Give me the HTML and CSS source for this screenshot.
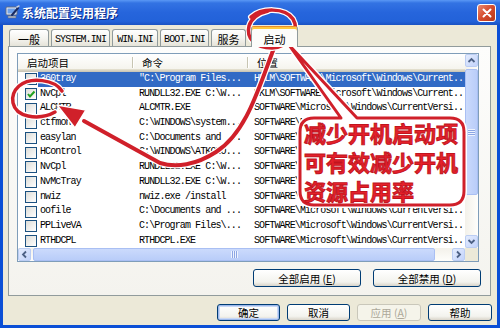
FILE: index.html
```html
<!DOCTYPE html>
<html lang="zh-CN">
<head>
<meta charset="utf-8">
<title>系统配置实用程序</title>
<link rel="stylesheet" href="styles.css">
</head>
<body>
<div class="window">
  <div class="titlebar">
    <svg class="app-icon" width="15" height="15" viewBox="0 0 15 15">
      <rect x="1" y="2" width="11" height="8" rx="1" fill="#E8ECF4" stroke="#5A6A88"/>
      <rect x="2.5" y="3.5" width="8" height="5" fill="#6FA0E8"/>
      <rect x="3" y="11" width="8" height="2" fill="#B8BEC8" stroke="#5A6A88" stroke-width="0.6"/>
      <path d="M7 10 L13 3" stroke="#1A2A60" stroke-width="2" stroke-linecap="round"/>
      <path d="M12 2 L14 1" stroke="#C8D0E0" stroke-width="1.5" stroke-linecap="round"/>
    </svg>
    <span class="title">系统配置实用程序</span>
    <div class="close">
      <svg width="10" height="10" viewBox="0 0 10 10"><path d="M1.5 1.5 L8.5 8.5 M8.5 1.5 L1.5 8.5" stroke="#fff" stroke-width="2" stroke-linecap="round"/></svg>
    </div>
  </div>

  <div class="client">
    <div class="tabs">
      <div class="tab w1">一般</div>
      <div class="tab mono w2">SYSTEM.INI</div>
      <div class="tab mono w3">WIN.INI</div>
      <div class="tab mono w4">BOOT.INI</div>
      <div class="tab w5">服务</div>
      <div class="tab active">启动</div>
    </div>

    <div class="panel">
      <div class="list">
        <div class="list-view">
          <div class="header">
            <div class="hcell h1">启动项目</div>
            <div class="hcell h2">命令</div>
            <div class="hcell h3">位置</div>
          </div>
          <div class="rows">
            <div class="row selected"><div class="cb"><span class="box"></span></div><div class="cells"><span class="cell c1">360tray</span><span class="cell c2">"C:\Program Files...</span><span class="cell c3">HKLM\SOFTWARE\Microsoft\Windows\Current...</span></div></div>
            <div class="row"><div class="cb"><span class="box checked"><svg width="10" height="10" viewBox="0 0 10 10"><path d="M2 5 L4 7.5 L8.5 2.5" fill="none" stroke="#21A121" stroke-width="2"/></svg></span></div><div class="cells"><span class="cell c1">NvCpl</span><span class="cell c2">RUNDLL32.EXE C:\W...</span><span class="cell c3">HKLM\SOFTWARE\Microsoft\Windows\Current...</span></div></div>
            <div class="row"><div class="cb"><span class="box"></span></div><div class="cells"><span class="cell c1">ALCMTR</span><span class="cell c2">ALCMTR.EXE</span><span class="cell c3">SOFTWARE\Microsoft\Windows\CurrentVersi...</span></div></div>
            <div class="row"><div class="cb"><span class="box"></span></div><div class="cells"><span class="cell c1">ctfmon</span><span class="cell c2">C:\WINDOWS\system...</span><span class="cell c3">SOFTWARE\Microsoft\Windows\CurrentVersi...</span></div></div>
            <div class="row"><div class="cb"><span class="box"></span></div><div class="cells"><span class="cell c1">easylan</span><span class="cell c2">C:\Documents and ...</span><span class="cell c3">SOFTWARE\Microsoft\Windows\CurrentVersi...</span></div></div>
            <div class="row"><div class="cb"><span class="box"></span></div><div class="cells"><span class="cell c1">HControl</span><span class="cell c2">C:\WINDOWS\ATKOIO...</span><span class="cell c3">SOFTWARE\Microsoft\Windows\CurrentVersi...</span></div></div>
            <div class="row"><div class="cb"><span class="box"></span></div><div class="cells"><span class="cell c1">NvCpl</span><span class="cell c2">RUNDLL32.EXE C:\W...</span><span class="cell c3">SOFTWARE\Microsoft\Windows\CurrentVersi...</span></div></div>
            <div class="row"><div class="cb"><span class="box"></span></div><div class="cells"><span class="cell c1">NvMcTray</span><span class="cell c2">RUNDLL32.EXE C:\W...</span><span class="cell c3">SOFTWARE\Microsoft\Windows\CurrentVersi...</span></div></div>
            <div class="row"><div class="cb"><span class="box"></span></div><div class="cells"><span class="cell c1">nwiz</span><span class="cell c2">nwiz.exe /install</span><span class="cell c3">SOFTWARE\Microsoft\Windows\CurrentVersi...</span></div></div>
            <div class="row"><div class="cb"><span class="box"></span></div><div class="cells"><span class="cell c1">oofile</span><span class="cell c2">C:\Documents and ...</span><span class="cell c3">SOFTWARE\Microsoft\Windows\CurrentVersi...</span></div></div>
            <div class="row"><div class="cb"><span class="box"></span></div><div class="cells"><span class="cell c1">PPLiveVA</span><span class="cell c2">C:\Program Files\...</span><span class="cell c3">SOFTWARE\Microsoft\Windows\CurrentVersi...</span></div></div>
            <div class="row"><div class="cb"><span class="box"></span></div><div class="cells"><span class="cell c1">RTHDCPL</span><span class="cell c2">RTHDCPL.EXE</span><span class="cell c3">SOFTWARE\Microsoft\Windows\CurrentVersi...</span></div></div>
          </div>
        </div>

        <div class="vscroll">
          <div class="sbtn"><svg width="13" height="13" viewBox="0 0 13 13"><path d="M3.5 8 L6.5 5 L9.5 8" fill="none" stroke="#4D6185" stroke-width="1.8"/></svg></div>
          <div class="vthumb"><span class="grip-v"></span></div>
          <div class="vtrack"></div>
          <div class="sbtn"><svg width="13" height="13" viewBox="0 0 13 13"><path d="M3.5 5 L6.5 8 L9.5 5" fill="none" stroke="#4D6185" stroke-width="1.8"/></svg></div>
        </div>

        <div class="hscroll">
          <div class="sbtn"><svg width="13" height="13" viewBox="0 0 13 13"><path d="M8 3.5 L5 6.5 L8 9.5" fill="none" stroke="#4D6185" stroke-width="1.8"/></svg></div>
          <div class="hthumb"><span class="grip-h"></span></div>
          <div class="htrack"></div>
          <div class="sbtn"><svg width="13" height="13" viewBox="0 0 13 13"><path d="M5 3.5 L8 6.5 L5 9.5" fill="none" stroke="#4D6185" stroke-width="1.8"/></svg></div>
        </div>
        <div class="corner"></div>
      </div>

      <div class="panel-actions">
        <div class="btn wide">全部启用 (<u>E</u>)</div>
        <div class="btn wide">全部禁用 (<u>D</u>)</div>
      </div>
    </div>

    <div class="dialog-actions">
      <div class="btn default">确定</div>
      <div class="btn">取消</div>
      <div class="btn disabled">应用 (<u>A</u>)</div>
      <div class="btn">帮助</div>
    </div>
  </div>

  <svg class="annot" width="500" height="328" viewBox="0 0 500 328">
    <g stroke-linecap="round" stroke-linejoin="round">
      <path d="M314,118 L341,118 L289,45 L357,118 L450,118 Q464,118 464,132 L464,191 Q464,205 450,205 L314,205 Q300,205 300,191 L300,132 Q300,118 314,118 Z" fill="none" stroke="#fff" stroke-width="6"/>
      <path d="M314,118 L341,118 L289,45 L357,118 L450,118 Q464,118 464,132 L464,191 Q464,205 450,205 L314,205 Q300,205 300,191 L300,132 Q300,118 314,118 Z" fill="#fff" stroke="#D0202A" stroke-width="3"/>

      <path d="M274,48 C258,90 246,133 216,152 C196,165 176,168 160,163 L84,121" fill="none" stroke="#fff" stroke-width="6.5"/>
      <path d="M274,48 C258,90 246,133 216,152 C196,165 176,168 160,163 L84,121" fill="none" stroke="#D0202A" stroke-width="4"/>
      <path d="M57,105 L86,110 L75,128 Z" fill="#D0202A" stroke="#fff" stroke-width="1.5"/>

      <path d="M62,91 C55,80 31,76 19,86 C9,95 10,112 28,116 C38,118 48,116 55,112" fill="none" stroke="#fff" stroke-width="6"/>
      <path d="M62,91 C55,80 31,76 19,86 C9,95 10,112 28,116 C38,118 48,116 55,112" fill="none" stroke="#D0202A" stroke-width="3.5"/>

      <path d="M251,17 C261,8 285,7 293,19 C300,31 291,47 272,48 C255,48 246,38 249,26 C251,19 258,13 268,11" fill="none" stroke="#fff" stroke-width="6"/>
      <path d="M251,17 C261,8 285,7 293,19 C300,31 291,47 272,48 C255,48 246,38 249,26 C251,19 258,13 268,11" fill="none" stroke="#D0202A" stroke-width="3.5"/>
    </g>
  </svg>
  <div class="callout">减少开机启动项<br>可有效减少开机<br>资源占用率</div>
</div>
</body>
</html>
```

FILE: styles.css
```css
* { box-sizing: border-box; }
html, body { margin: 0; padding: 0; width: 500px; height: 328px; overflow: hidden; }
body {
  font-family: "Noto Sans CJK SC", "Noto Sans", sans-serif;
  font-size: 11px;
  color: #000;
  background: #fff;
}

.window {
  position: relative;
  width: 500px;
  height: 328px;
  background: #0B4FD6;
  display: flex;
  flex-direction: column;
}

/* title bar */
.titlebar {
  height: 25px;
  flex: none;
  display: flex;
  align-items: center;
  padding: 0 4px 0 5px;
  background: linear-gradient(#5A98F5 0%, #3373E3 12%, #2665DC 50%, #2262D9 85%, #1A52C2 100%);
}
.app-icon { flex: none; margin-right: 2px; }
.title {
  flex: 1;
  color: #fff;
  font-weight: 700;
  font-size: 12px;
  line-height: 25px;
  text-shadow: 1px 1px 0 #0B2A88;
}
.close {
  width: 19px;
  height: 18px;
  border: 1px solid #fff;
  border-radius: 3px;
  background: linear-gradient(135deg, #EA8A70, #D54B2C 50%, #B9381A);
  display: flex;
  align-items: center;
  justify-content: center;
}

/* client area */
.client {
  flex: 1;
  margin: 0 3px 3px;
  background: #ECE9D8;
  padding: 1px 5px 0 5px;
  display: flex;
  flex-direction: column;
}

/* tabs */
.tabs {
  height: 20px;
  display: flex;
  align-items: flex-end;
  gap: 2px;
  padding-left: 1px;
  position: relative;
  z-index: 1;
}
.tab {
  height: 17px;
  border: 1px solid #919B9C;
  border-bottom: none;
  border-radius: 3px 3px 0 0;
  background: linear-gradient(#FFFFFF, #F4F3EE 55%, #E5E3D8);
  display: flex;
  align-items: center;
  justify-content: center;
  font-size: 11px;
  padding-top: 2px;
}
.tab.mono {
  font-family: "Liberation Mono", monospace;
  font-size: 10px;
  letter-spacing: -0.9px;
}
.w1 { width: 40px; }
.w2 { width: 59px; }
.w3 { width: 46px; }
.w4 { width: 49px; }
.w5 { width: 35px; }
.tab.active {
  width: 47px;
  height: 21px;
  margin-left: 3px;
  margin-bottom: -1px;
  border-top: 1px solid #E68B2C;
  box-shadow: inset 0 2px 0 #FFC83C;
  background: #FCFCFA;
  padding-top: 3px;
}

/* tab page */
.panel {
  width: 483px;
  height: 250px;
  border: 1px solid #919B9C;
  background: linear-gradient(#FDFDFC, #F4F3EE);
  padding: 6px 10px 0 8px;
  display: flex;
  flex-direction: column;
}

.list {
  width: 462px;
  height: 209px;
  border: 1px solid #7F9DB9;
  background: #fff;
  display: grid;
  grid-template-columns: 1fr 13px;
  grid-template-rows: 1fr 13px;
  overflow: hidden;
}
.list-view { overflow: hidden; min-width: 0; }

.header {
  height: 18px;
  display: flex;
  background: linear-gradient(#FFFFFF, #F3F2EA);
  box-shadow: inset 0 -1px 0 #CBC7B8, inset 0 -2px 0 #D6D2C2, inset 0 -3px 0 #E2DECD;
}
.hcell {
  position: relative;
  padding-left: 9px;
  line-height: 17px;
  font-size: 10.5px;
  white-space: nowrap;
}
.h1, .h2 { width: 115px; flex: none; }
.h3 { flex: 1; }
.h1::after, .h2::after {
  content: "";
  position: absolute;
  right: 0;
  top: 3px;
  bottom: 4px;
  width: 1px;
  background: #C7C5B2;
  box-shadow: 1px 0 0 #fff;
}

.row {
  height: 14.7px;
  display: flex;
  align-items: stretch;
}
.cb {
  width: 20px;
  flex: none;
  display: flex;
  align-items: center;
  padding-left: 7px;
}
.box {
  width: 12px;
  height: 12px;
  border: 1px solid #1C5180;
  background: linear-gradient(135deg, #DCDCD7, #FFFFFF);
  display: flex;
  align-items: center;
  justify-content: center;
}
.cells {
  flex: 1;
  display: flex;
  min-width: 0;
}
.row.selected .cells { background: #316AC5; color: #fff; }
.cell {
  font-family: "Liberation Mono", monospace;
  font-size: 10px;
  letter-spacing: -0.9px;
  line-height: 14.7px;
  white-space: nowrap;
  overflow: hidden;
}
.c1 { width: 95px; flex: none; padding-left: 2px; }
.c2 { width: 115px; flex: none; padding-left: 6px; }
.c3 { flex: 1; padding-left: 6px; }

/* scrollbars */
.vscroll {
  display: flex;
  flex-direction: column;
  background: linear-gradient(90deg, #F3F1EA, #FEFEFB);
}
.hscroll {
  display: flex;
  background: linear-gradient(#F3F1EA, #FEFEFB);
}
.corner { background: #ECE9D8; }
.sbtn {
  width: 13px;
  height: 13px;
  flex: none;
  border: 1px solid #BBCDF3;
  border-radius: 2px;
  background: linear-gradient(135deg, #E4ECFD, #C2D3FB);
}
.sbtn svg { display: block; margin: -1px; }
.vthumb {
  height: 126px;
  margin-top: 2px;
  flex: none;
  border: 1px solid #A9BFF3;
  border-radius: 2px;
  background: linear-gradient(90deg, #CBDAFC, #B9CDF9);
  display: flex;
  align-items: center;
  justify-content: center;
}
.vtrack { flex: 1; }
.hthumb {
  width: 402px;
  margin-left: 2px;
  flex: none;
  border: 1px solid #A9BFF3;
  border-radius: 2px;
  background: linear-gradient(#CBDAFC, #B9CDF9);
  display: flex;
  align-items: center;
  justify-content: center;
}
.htrack { flex: 1; }
.grip-v {
  width: 7px;
  height: 7px;
  background: repeating-linear-gradient(#EEF3FE 0 1px, #8CA6E4 1px 2px);
}
.grip-h {
  width: 7px;
  height: 7px;
  background: repeating-linear-gradient(90deg, #EEF3FE 0 1px, #8CA6E4 1px 2px);
}

/* buttons */
.panel-actions {
  display: flex;
  justify-content: flex-end;
  gap: 12px;
  margin-top: 7px;
  margin-right: -1px;
}
.btn {
  width: 63px;
  height: 17px;
  border: 1px solid #003C74;
  border-radius: 3px;
  background: linear-gradient(#FFFFFF, #F3F3EE 75%, #D9D4C9);
  display: flex;
  align-items: center;
  justify-content: center;
  font-size: 10.5px;
  white-space: nowrap;
}
.btn.wide { width: 108px; height: 18px; }
.btn.default { box-shadow: inset 0 0 0 1px #9DB9EB, inset 0 0 0 2px #C9D8F5; }
.btn.disabled {
  color: #ACA899;
  border-color: #C9C7BA;
  background: #F5F4EA;
  width: 64px;
}
.dialog-actions {
  display: flex;
  justify-content: flex-end;
  gap: 7px;
  margin-top: 8px;
}
.dialog-actions .btn:last-child { width: 64px; }

/* annotations */
.annot {
  position: absolute;
  left: 0;
  top: 0;
  pointer-events: none;
}
.callout {
  position: absolute;
  left: 304px;
  top: 118px;
  font-size: 22px;
  line-height: 29px;
  font-weight: 700;
  color: #E5202A;
  -webkit-text-stroke: 0.9px #C0141E;
  white-space: nowrap;
}
```
